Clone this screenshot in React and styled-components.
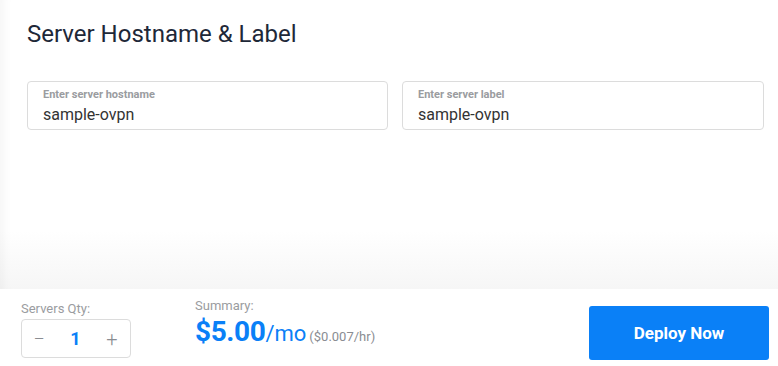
import React, { useState } from 'react';
import styled, { createGlobalStyle } from 'styled-components';

const GlobalStyle = createGlobalStyle`
  html, body {
    margin: 0;
    padding: 0;
    background: #fff;
    font-family: Roboto, "Liberation Sans", Arial, sans-serif;
  }
`;

const Page = styled.div`
  width: 778px;
  height: 366px;
  display: flex;
  flex-direction: column;
  overflow: hidden;
  background: #fff;
`;

const Content = styled.main`
  flex: 1;
  padding: 20px 15px 0 27px;
  box-shadow: inset 12px 0 12px -10px rgba(0, 0, 0, 0.05);
  background: linear-gradient(to bottom, #fff 0%, #fff 80%, #f6f6f6 100%);
`;

const Title = styled.h2`
  margin: 0;
  font-size: 24px;
  font-weight: 400;
  line-height: 28px;
  color: #1e2838;
`;

const Fields = styled.div`
  display: grid;
  grid-template-columns: 361px 362px;
  gap: 14px;
  margin-top: 33px;
`;

const Field = styled.label`
  display: flex;
  flex-direction: column;
  height: 49px;
  box-sizing: border-box;
  border: 1px solid #dcdcdc;
  border-radius: 4px;
  padding: 6px 15px 0;
`;

const FieldLabel = styled.span`
  font-size: 11px;
  font-weight: 700;
  color: #9a9ca0;
  line-height: 13px;
`;

const FieldInput = styled.input`
  border: none;
  outline: none;
  padding: 0;
  margin-top: 4px;
  font-family: inherit;
  font-size: 16px;
  color: #333;
  background: transparent;
  line-height: 19px;
`;

const Footer = styled.footer`
  height: 77px;
  flex-shrink: 0;
  display: flex;
  align-items: flex-start;
  padding: 0 9px 0 21px;
  background: #fff;
`;

const QtyGroup = styled.div`
  display: flex;
  flex-direction: column;
  padding-top: 12px;
  width: 174px;
`;

const SmallLabel = styled.span`
  font-size: 13px;
  color: #9a9ca0;
  line-height: 15px;
`;

const Stepper = styled.div`
  display: flex;
  align-items: center;
  justify-content: space-between;
  width: 110px;
  height: 39px;
  box-sizing: border-box;
  margin-top: 3px;
  border: 1px solid #dcdcdc;
  border-radius: 4px;
  padding: 0 10px 0 9px;
`;

const StepButton = styled.button`
  border: none;
  background: none;
  padding: 0;
  width: 16px;
  font-family: inherit;
  font-size: 20px;
  font-weight: 300;
  color: #8a8d92;
  cursor: pointer;
  line-height: 1;
`;

const QtyValue = styled.span`
  font-size: 18px;
  font-weight: 700;
  color: #0a80f7;
`;

const Summary = styled.div`
  display: flex;
  flex-direction: column;
  padding-top: 9px;
  flex: 1;
`;

const PriceLine = styled.div`
  display: flex;
  align-items: baseline;
  margin-top: 2px;
  color: #0a80f7;
`;

const Price = styled.span`
  font-size: 28px;
  font-weight: 700;
  letter-spacing: -0.4px;
`;

const Per = styled.span`
  font-size: 22px;
  font-weight: 400;
`;

const Hourly = styled.span`
  font-size: 13px;
  color: #8a8d92;
  margin-left: 3px;
`;

const DeployButton = styled.button`
  margin-top: 17px;
  width: 180px;
  height: 54px;
  border: none;
  border-radius: 3px;
  background: #0a80f7;
  color: #fff;
  font-family: inherit;
  font-size: 17px;
  font-weight: 700;
  cursor: pointer;
`;

export default function App() {
  const [qty, setQty] = useState(1);
  const [hostname, setHostname] = useState('sample-ovpn');
  const [label, setLabel] = useState('sample-ovpn');

  return (
    <Page>
      <GlobalStyle />
      <Content>
        <Title>Server Hostname &amp; Label</Title>
        <Fields>
          <Field>
            <FieldLabel>Enter server hostname</FieldLabel>
            <FieldInput value={hostname} onChange={(e) => setHostname(e.target.value)} />
          </Field>
          <Field>
            <FieldLabel>Enter server label</FieldLabel>
            <FieldInput value={label} onChange={(e) => setLabel(e.target.value)} />
          </Field>
        </Fields>
      </Content>
      <Footer>
        <QtyGroup>
          <SmallLabel>Servers Qty:</SmallLabel>
          <Stepper>
            <StepButton onClick={() => setQty(Math.max(1, qty - 1))}>&minus;</StepButton>
            <QtyValue>{qty}</QtyValue>
            <StepButton onClick={() => setQty(qty + 1)}>+</StepButton>
          </Stepper>
        </QtyGroup>
        <Summary>
          <SmallLabel>Summary:</SmallLabel>
          <PriceLine>
            <Price>${(5 * qty).toFixed(2)}</Price>
            <Per>/mo</Per>
            <Hourly>(${(0.007 * qty).toFixed(3)}/hr)</Hourly>
          </PriceLine>
        </Summary>
        <DeployButton>Deploy Now</DeployButton>
      </Footer>
    </Page>
  );
}
